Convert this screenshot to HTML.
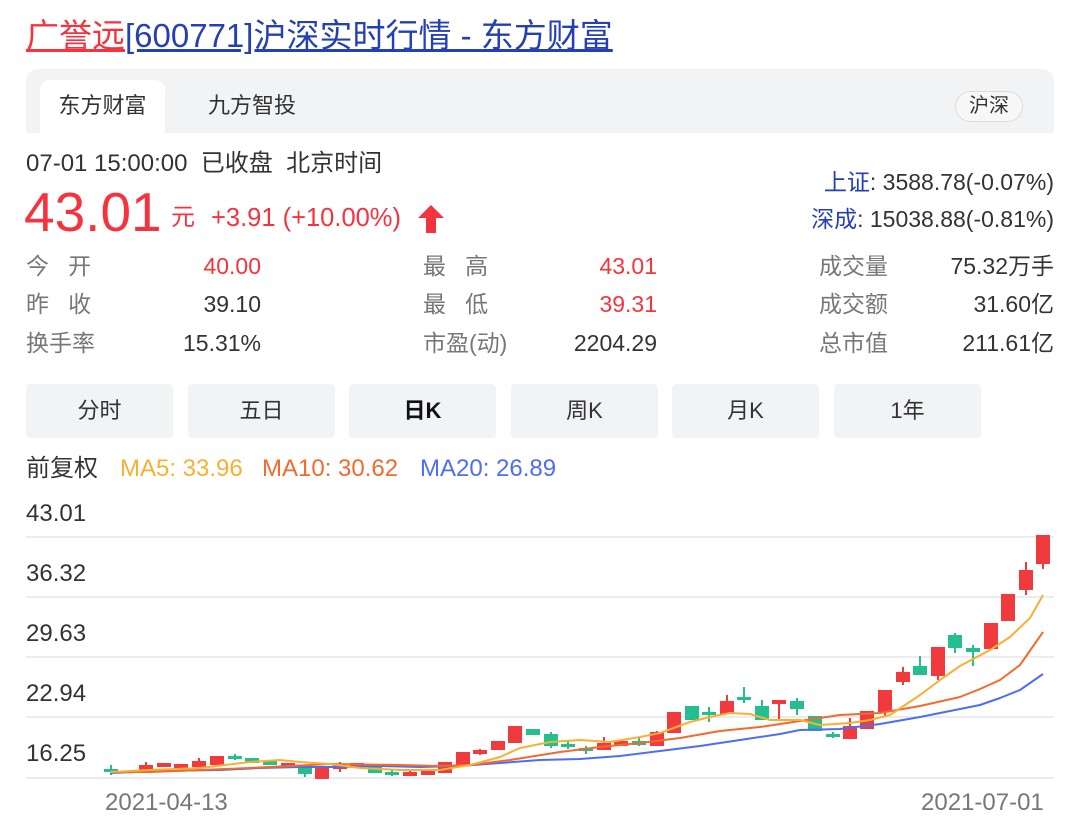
<!DOCTYPE html>
<html><head><meta charset="utf-8"><style>
*{margin:0;padding:0;box-sizing:border-box}
body{width:1080px;height:821px;background:#fff;font-family:"Liberation Sans","Noto Sans CJK SC",sans-serif;position:relative;overflow:hidden;color:#333}
.a{position:absolute;white-space:nowrap}
.title{left:26px;top:16px;font-size:33px;line-height:40px}
.title .r{color:#f5333f;text-decoration:underline}
.title .b{color:#2440b3;text-decoration:underline}
.tabbar{left:26px;top:69px;width:1028px;height:64px;background:#f2f3f5;border-radius:12px 12px 0 0}
.tab1{left:40px;top:80px;width:125px;height:53px;background:#fff;border-radius:10px 10px 0 0;font-size:22px;text-align:center;line-height:52px}
.tab2{left:208px;top:80px;font-size:22px;line-height:52px}
.pill{left:955px;top:91px;width:68px;height:31px;border:1px solid #ddd;border-radius:16px;background:#f7f7f8;font-size:20px;text-align:center;line-height:29px}
.f19{font-size:23px;line-height:26px}
.f24{font-size:24px;line-height:26px}
.red{color:#f5333f}
.g{color:#777}
.v{text-align:right;width:140px}
.btn{top:384px;width:147px;height:54px;background:#f2f3f5;border-radius:4px;text-align:center;line-height:54px;font-size:22px;color:#333}
</style></head><body>
<div class="a title"><span class="r">广誉远</span><span class="b">[600771]沪深实时行情 - 东方财富</span></div>
<div class="a tabbar"></div>
<div class="a tab1">东方财富</div>
<div class="a tab2">九方智投</div>
<div class="a pill">沪深</div>

<div class="a" style="left:26px;top:150px;font-size:24px;line-height:28px">07-01 15:00:00&nbsp; 已收盘&nbsp; 北京时间</div>
<div class="a red" style="left:24px;top:183px;font-size:55px;line-height:58px">43.01</div>
<div class="a red" style="left:171px;top:203px;font-size:24px;line-height:30px">元</div>
<div class="a red" style="left:211px;top:203px;font-size:25.5px;line-height:30px">+3.91 (+10.00%)</div>
<svg class="a" style="left:417px;top:204px" width="28" height="30"><path d="M14 1 L27 14 L19 14 L19 29 L9 29 L9 14 L1 14 Z" fill="#f5333f"/></svg>
<div class="a f19" style="right:26px;top:169px"><span style="color:#2440b3">上证</span>: 3588.78(-0.07%)</div>
<div class="a f19" style="right:26px;top:206px"><span style="color:#2440b3">深成</span>: 15038.88(-0.81%)</div>

<div class="a f19 g" style="left:26px;top:253px">今&nbsp;&nbsp;&nbsp;开</div><div class="a f19 red v" style="left:121px;top:253px">40.00</div>
<div class="a f19 g" style="left:26px;top:291px">昨&nbsp;&nbsp;&nbsp;收</div><div class="a f19 v" style="left:121px;top:291px">39.10</div>
<div class="a f19 g" style="left:26px;top:330px">换手率</div><div class="a f19 v" style="left:121px;top:330px">15.31%</div>
<div class="a f19 g" style="left:423px;top:253px">最&nbsp;&nbsp;&nbsp;高</div><div class="a f19 red v" style="left:517px;top:253px">43.01</div>
<div class="a f19 g" style="left:423px;top:291px">最&nbsp;&nbsp;&nbsp;低</div><div class="a f19 red v" style="left:517px;top:291px">39.31</div>
<div class="a f19 g" style="left:423px;top:330px">市盈(动)</div><div class="a f19 v" style="left:517px;top:330px">2204.29</div>
<div class="a f19 g" style="left:819px;top:253px">成交量</div><div class="a f19" style="right:26px;top:253px">75.32万手</div>
<div class="a f19 g" style="left:819px;top:291px">成交额</div><div class="a f19" style="right:26px;top:291px">31.60亿</div>
<div class="a f19 g" style="left:819px;top:330px">总市值</div><div class="a f19" style="right:26px;top:330px">211.61亿</div>

<div class="a btn" style="left:26px">分时</div>
<div class="a btn" style="left:188px">五日</div>
<div class="a btn" style="left:349px;font-weight:bold;color:#111">日K</div>
<div class="a btn" style="left:511px">周K</div>
<div class="a btn" style="left:672px">月K</div>
<div class="a btn" style="left:834px">1年</div>

<div class="a f24" style="left:26px;top:456px">前复权</div>
<div class="a f24" style="left:120px;top:456px;color:#f8b032">MA5: 33.96</div>
<div class="a f24" style="left:262px;top:456px;color:#f26a2d">MA10: 30.62</div>
<div class="a f24" style="left:420px;top:456px;color:#4e6ef2">MA20: 26.89</div>

<div class="a f24" style="left:26px;top:501px">43.01</div>
<div class="a f24" style="left:26px;top:561px">36.32</div>
<div class="a f24" style="left:26px;top:621px">29.63</div>
<div class="a f24" style="left:26px;top:681px">22.94</div>
<div class="a f24" style="left:26px;top:741px">16.25</div>
<div class="a f24 g" style="left:105px;top:790px">2021-04-13</div>
<div class="a f24 g" style="left:921px;top:790px">2021-07-01</div>

<svg class="a" style="left:0;top:0" width="1080" height="821">
<g stroke="#ececec" stroke-width="2">
<line x1="26" y1="537" x2="1054" y2="537"/><line x1="26" y1="597" x2="1054" y2="597"/><line x1="26" y1="657" x2="1054" y2="657"/><line x1="26" y1="717" x2="1054" y2="717"/><line x1="26" y1="778" x2="1054" y2="778"/>
</g>
<g stroke-width="2">
<g stroke="#f03a3e" fill="#f03a3e">
<line x1="146" y1="762" x2="146" y2="773"/><rect x="140" y="766" width="12" height="4"/>
<rect x="158" y="764" width="12" height="2"/><rect x="175" y="765" width="12" height="2"/>
<line x1="199" y1="758" x2="199" y2="766"/><rect x="193" y="762" width="12" height="4"/>
<rect x="211" y="757" width="12" height="7"/>
<rect x="282" y="764" width="12" height="2"/>
<rect x="316" y="767" width="12" height="11"/>
<line x1="340" y1="762" x2="340" y2="772"/><rect x="334" y="766" width="12" height="2"/>
<rect x="351" y="764" width="12" height="2"/>
<line x1="410" y1="771" x2="410" y2="776"/><rect x="404" y="773" width="12" height="2"/>
<rect x="422" y="772" width="12" height="2"/>
<rect x="439" y="763" width="12" height="9"/>
<rect x="457" y="753" width="12" height="12"/>
<line x1="480" y1="749" x2="480" y2="755"/><rect x="474" y="751" width="12" height="2"/>
<rect x="492" y="742" width="12" height="7"/>
<rect x="509" y="727" width="12" height="15"/>
<line x1="604" y1="737" x2="604" y2="750"/><rect x="598" y="744" width="12" height="5"/>
<rect x="615" y="742" width="12" height="3"/>
<line x1="657" y1="731" x2="657" y2="746"/><rect x="651" y="733" width="12" height="12"/>
<rect x="668" y="713" width="12" height="19"/>
<line x1="727" y1="695" x2="727" y2="714"/><rect x="721" y="702" width="12" height="11"/>
<line x1="779" y1="702" x2="779" y2="719"/><rect x="773" y="701" width="12" height="2"/>
<line x1="850" y1="718" x2="850" y2="739"/><rect x="844" y="727" width="12" height="11"/>
<rect x="861" y="712" width="12" height="16"/>
<line x1="885" y1="709" x2="885" y2="717"/><rect x="879" y="691" width="12" height="20"/>
<line x1="903" y1="667" x2="903" y2="685"/><rect x="897" y="673" width="12" height="8"/>
<line x1="938" y1="673" x2="938" y2="680"/><rect x="932" y="648" width="12" height="27"/>
<rect x="985" y="624" width="12" height="24"/>
<rect x="1002" y="595" width="12" height="25"/>
<line x1="1026" y1="562" x2="1026" y2="595"/><rect x="1020" y="571" width="12" height="18"/>
<line x1="1043" y1="560" x2="1043" y2="569"/><rect x="1037" y="536" width="12" height="27"/>
</g>
<g stroke="#23bf8e" fill="#23bf8e">
<line x1="111" y1="765" x2="111" y2="775"/><rect x="105" y="770" width="12" height="1"/>
<line x1="235" y1="754" x2="235" y2="760"/><rect x="229" y="757" width="12" height="1"/>
<rect x="246" y="759" width="12" height="3"/><rect x="264" y="762" width="12" height="2"/>
<line x1="305" y1="765" x2="305" y2="777"/><rect x="299" y="766" width="12" height="7"/>
<rect x="369" y="765" width="12" height="7"/>
<line x1="392" y1="770" x2="392" y2="776"/><rect x="386" y="773" width="12" height="1"/>
<rect x="527" y="730" width="12" height="4"/>
<line x1="551" y1="732" x2="551" y2="748"/><rect x="545" y="735" width="12" height="10"/>
<line x1="568" y1="741" x2="568" y2="749"/><rect x="562" y="745" width="12" height="1"/>
<line x1="586" y1="746" x2="586" y2="754"/><rect x="580" y="749" width="12" height="1"/>
<line x1="639" y1="738" x2="639" y2="746"/><rect x="633" y="742" width="12" height="2"/>
<rect x="686" y="707" width="12" height="12"/>
<line x1="709" y1="707" x2="709" y2="722"/><rect x="703" y="713" width="12" height="1"/>
<line x1="744" y1="687" x2="744" y2="703"/><rect x="738" y="698" width="12" height="1"/>
<line x1="762" y1="700" x2="762" y2="719"/><rect x="756" y="707" width="12" height="12"/>
<line x1="797" y1="698" x2="797" y2="715"/><rect x="791" y="702" width="12" height="6"/>
<rect x="809" y="717" width="12" height="13"/>
<line x1="833" y1="732" x2="833" y2="738"/><rect x="827" y="735" width="12" height="1"/>
<line x1="920" y1="656" x2="920" y2="675"/><rect x="914" y="667" width="12" height="7"/>
<line x1="955" y1="633" x2="955" y2="653"/><rect x="949" y="636" width="12" height="11"/>
<line x1="973" y1="645" x2="973" y2="666"/><rect x="967" y="649" width="12" height="2"/>
</g>
</g>
<g fill="none" stroke-width="2" stroke-linejoin="round">
<polyline stroke="#4e6ef2" points="110,773 160,771 220,770 260,768 300,767 340,767 380,766 420,767 460,766 500,763 540,760 580,759 620,756 660,751 700,746 740,740 780,734 800,730 840,729 880,724 920,717 960,709 980,705 1000,698 1020,690 1043,674"/>
<polyline stroke="#f26a2d" points="110,772 150,772 250,768 330,764 400,765 440,766 470,765 510,760 560,752 600,747 640,743 680,738 720,731 760,727 800,721 840,715 880,713 920,706 960,697 980,689 1000,680 1020,665 1043,632"/>
<polyline stroke="#f8b032" points="110,772 150,770 200,768 250,762 280,760 300,762 330,764 360,768 400,770 440,770 470,765 500,757 520,748 550,742 580,740 610,742 640,737 660,733 690,722 710,717 730,713 750,714 770,720 800,720 820,725 850,723 870,720 890,715 920,695 940,680 960,666 990,650 1010,637 1030,618 1043,595"/>
</g>
</svg>
</body></html>
